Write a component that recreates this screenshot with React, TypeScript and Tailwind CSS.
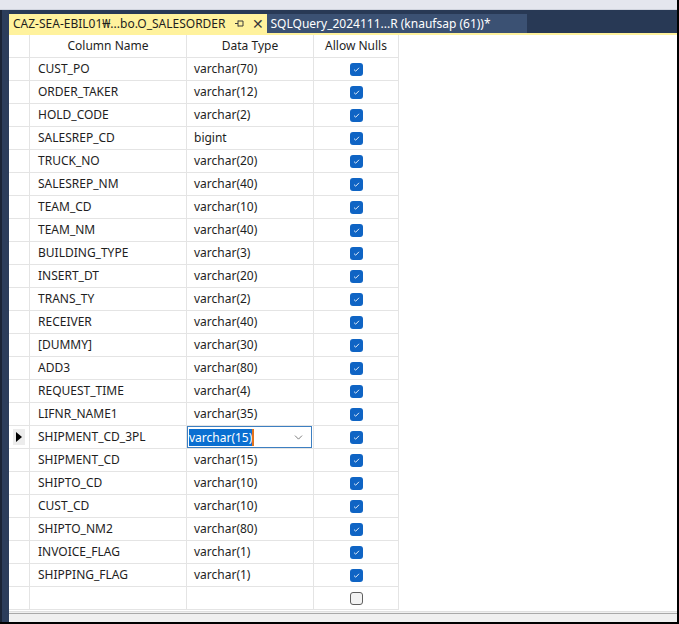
import { ChevronDown } from 'lucide-react';

type Row = { name: string; type: string; nulls: boolean };

const rows: Row[] = [
  { name: 'CUST_PO', type: 'varchar(70)', nulls: true },
  { name: 'ORDER_TAKER', type: 'varchar(12)', nulls: true },
  { name: 'HOLD_CODE', type: 'varchar(2)', nulls: true },
  { name: 'SALESREP_CD', type: 'bigint', nulls: true },
  { name: 'TRUCK_NO', type: 'varchar(20)', nulls: true },
  { name: 'SALESREP_NM', type: 'varchar(40)', nulls: true },
  { name: 'TEAM_CD', type: 'varchar(10)', nulls: true },
  { name: 'TEAM_NM', type: 'varchar(40)', nulls: true },
  { name: 'BUILDING_TYPE', type: 'varchar(3)', nulls: true },
  { name: 'INSERT_DT', type: 'varchar(20)', nulls: true },
  { name: 'TRANS_TY', type: 'varchar(2)', nulls: true },
  { name: 'RECEIVER', type: 'varchar(40)', nulls: true },
  { name: '[DUMMY]', type: 'varchar(30)', nulls: true },
  { name: 'ADD3', type: 'varchar(80)', nulls: true },
  { name: 'REQUEST_TIME', type: 'varchar(4)', nulls: true },
  { name: 'LIFNR_NAME1', type: 'varchar(35)', nulls: true },
  { name: 'SHIPMENT_CD_3PL', type: 'varchar(15)', nulls: true },
  { name: 'SHIPMENT_CD', type: 'varchar(15)', nulls: true },
  { name: 'SHIPTO_CD', type: 'varchar(10)', nulls: true },
  { name: 'CUST_CD', type: 'varchar(10)', nulls: true },
  { name: 'SHIPTO_NM2', type: 'varchar(80)', nulls: true },
  { name: 'INVOICE_FLAG', type: 'varchar(1)', nulls: true },
  { name: 'SHIPPING_FLAG', type: 'varchar(1)', nulls: true },
  { name: '', type: '', nulls: false },
];

const SELECTED = 16;

function Check({ on }: { on: boolean }) {
  if (!on) {
    return <div className="w-[13px] h-[13px] rounded-[3px] border border-[#5f5f5f] bg-[#f3f3f3]" />;
  }
  return (
    <div className="w-[13px] h-[13px] rounded-[3px] bg-[#0f64c4] flex items-center justify-center">
      <svg width="9" height="9" viewBox="0 0 9 9">
        <path d="M2 4.6 L3.7 6.2 L7 2.8" fill="none" stroke="#dce9f8" strokeWidth="1" />
      </svg>
    </div>
  );
}

function PinIcon() {
  return (
    <svg width="11" height="11" viewBox="0 0 11 11" className="text-[#3a3a3a]">
      <path d="M1 5.5 H4 M4 2.5 V8.5 M4 3 H9 V8 H4" fill="none" stroke="currentColor" strokeWidth="1" />
    </svg>
  );
}

export default function App() {
  return (
    <div
      className="w-[679px] h-[624px] overflow-hidden bg-white flex flex-col border-r-2 border-b-2 border-black text-[12px] text-[#1e1e1e]"
      style={{ fontFamily: '"Noto Sans", "Noto Sans CJK KR", sans-serif' }}
    >
      {/* top strip */}
      <div className="h-[10px] bg-[#e4e6ee] border-b border-[#cfd3dd] shrink-0" />

      <div className="flex flex-1 min-h-0">
        {/* left edge */}
        <div className="w-[9px] bg-[#2c3d5b] border-l-2 border-[#1b2436] shrink-0" />

        <div className="flex-1 flex flex-col min-w-0">
          {/* tabs */}
          <div className="h-[23px] bg-[#283955] flex items-end shrink-0">
            <div className="h-[19px] bg-[#fff29d] flex items-center pl-[4px] pr-[3px] text-[12px] text-[#1e1e1e]">
              <span className="leading-none">CAZ-SEA-EBIL01₩...bo.O_SALESORDER</span>
              <span className="ml-[8px]"><PinIcon /></span>
              <span className="ml-[7px] text-[14px] leading-none text-[#3a3a3a]">✕</span>
            </div>
            <div className="h-[19px] bg-[#3b5173] flex items-center pl-[4px] pr-[36px] text-[12px] text-white">
              <span className="leading-none">SQLQuery_2024111...R (knaufsap (61))*</span>
            </div>
          </div>
          <div className="h-[2px] bg-[#fff29d] shrink-0" />

          {/* grid */}
          <div className="flex-1 min-h-0">
            <div className="grid grid-cols-[21px_157px_127px_85px] w-[390px]">
              <div className="h-[23px] border-r border-b border-[#e4e4e4]" />
              <div className="h-[23px] border-r border-b border-[#e4e4e4] flex items-center justify-center">Column Name</div>
              <div className="h-[23px] border-r border-b border-[#e4e4e4] flex items-center justify-center">Data Type</div>
              <div className="h-[23px] border-r border-b border-[#e4e4e4] flex items-center justify-center">Allow Nulls</div>
              {rows.map((r, i) => {
                const sel = i === SELECTED;
                return [
                  <div key={i + 'h'} className="h-[23px] border-r border-b border-[#e4e4e4] flex items-center justify-center">
                    {sel && (
                      <div className="w-[12px] h-[16px] bg-[#ececec] flex items-center justify-center">
                        <svg width="6" height="10" viewBox="0 0 6 10">
                          <path d="M0 0 L6 5 L0 10 Z" fill="#000" />
                        </svg>
                      </div>
                    )}
                  </div>,
                  <div key={i + 'n'} className="h-[23px] border-r border-b border-[#e4e4e4] flex items-center pl-[8px]">
                    {r.name}
                  </div>,
                  sel ? (
                    <div key={i + 't'} className="h-[23px] border-b border-r border-[#e4e4e4] relative">
                      <div className="absolute inset-y-0 left-0 right-[1px] border border-[#3d7fc1] bg-white flex items-center pl-[1px]">
                        <span className="bg-[#0a6fd1] text-white leading-[17px]">{r.type}</span>
                        <span className="w-[2px] h-[17px] bg-[#e2731c]" />
                        <ChevronDown className="ml-auto mr-[6px] w-[13px] h-[13px] text-[#606060]" strokeWidth={1.5} />
                      </div>
                    </div>
                  ) : (
                    <div key={i + 't'} className="h-[23px] border-r border-b border-[#e4e4e4] flex items-center pl-[7px]">
                      {r.type}
                    </div>
                  ),
                  <div key={i + 'c'} className="h-[23px] border-r border-b border-[#e4e4e4] flex items-center justify-center">
                    <Check on={r.nulls} />
                  </div>,
                ];
              })}
            </div>
          </div>

          {/* horizontal scroll edge */}
          <div className="h-[11px] shrink-0 border-t border-[#e0e0e0] bg-[#f0f0f0] flex flex-col">
            <div className="h-[1px] mt-[1px] bg-[#a9a9a9]" />
          </div>
        </div>
      </div>
    </div>
  );
}
